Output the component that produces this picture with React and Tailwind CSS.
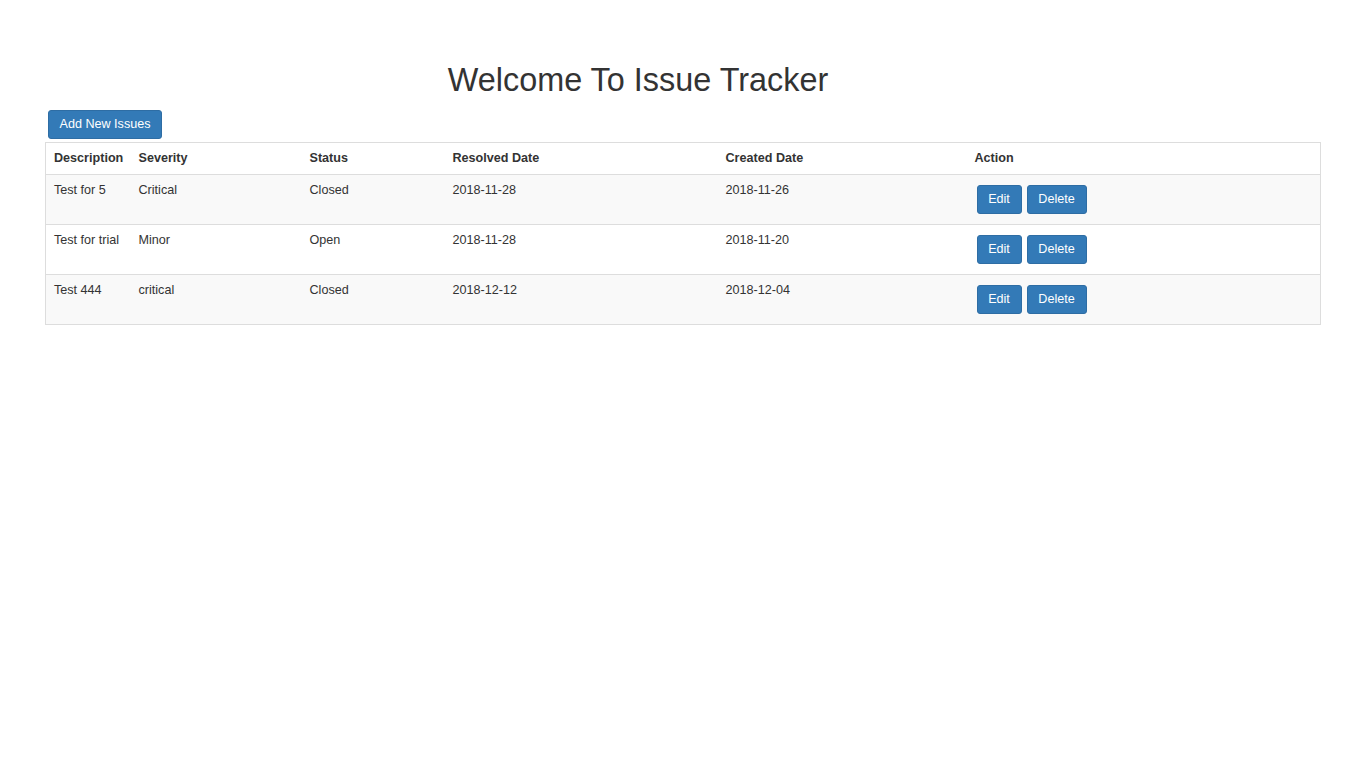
import React from "react";

const issues = [
  { description: "Test for 5", severity: "Critical", status: "Closed", resolved: "2018-11-28", created: "2018-11-26" },
  { description: "Test for trial", severity: "Minor", status: "Open", resolved: "2018-11-28", created: "2018-11-20" },
  { description: "Test 444", severity: "critical", status: "Closed", resolved: "2018-12-12", created: "2018-12-04" },
];

const btn =
  "inline-block h-[29px] rounded-[3px] border border-[#2e6da4] bg-[#337ab7] text-white text-[12.6px] leading-none";

const App = () => {
  return (
    <div
      className="min-h-screen bg-white text-[#333] text-[12.6px] leading-[18px]"
      style={{ fontFamily: '"Liberation Sans", Arial, sans-serif' }}
    >
      {/* HEADER */}
      <div className="w-[1276px] pt-[62px] text-center">
        <h1 className="text-[32.4px] leading-[36px] font-normal">Welcome To Issue Tracker</h1>
      </div>

      <div className="pl-[45px] pr-[45px]">
        <div className="pt-[12px] pb-[3px] pl-[3px]">
          <button className={`${btn} w-[114px]`}>Add New Issues</button>
        </div>

        {/* ISSUES TABLE */}
        <table className="w-[1276px] border border-[#ddd] border-collapse table-fixed">
          <colgroup>
            <col className="w-[85px]" />
            <col className="w-[171px]" />
            <col className="w-[143px]" />
            <col className="w-[273px]" />
            <col className="w-[249px]" />
            <col />
          </colgroup>
          <thead>
            <tr className="h-[32px] border-b border-[#ddd]">
              {["Description", "Severity", "Status", "Resolved Date", "Created Date", "Action"].map((h) => (
                <th key={h} className="px-[8px] pt-[6px] pb-[6px] text-left align-top font-bold">
                  {h}
                </th>
              ))}
            </tr>
          </thead>
          <tbody>
            {issues.map((row, i) => (
              <tr
                key={i}
                className={`h-[50px] border-b border-[#ddd] ${i % 2 === 0 ? "bg-[#f9f9f9]" : "bg-white"}`}
              >
                <td className="px-[8px] pt-[6px] align-top">{row.description}</td>
                <td className="px-[8px] pt-[6px] align-top">{row.severity}</td>
                <td className="px-[8px] pt-[6px] align-top">{row.status}</td>
                <td className="px-[8px] pt-[6px] align-top">{row.resolved}</td>
                <td className="px-[8px] pt-[6px] align-top">{row.created}</td>
                <td className="px-[8px] pt-[4px] align-top">
                  <div className="flex gap-[5px] pl-[2px] pt-[6px]">
                    <button className={`${btn} w-[45px]`}>Edit</button>
                    <button className={`${btn} w-[60px]`}>Delete</button>
                  </div>
                </td>
              </tr>
            ))}
          </tbody>
        </table>
      </div>
    </div>
  );
};

export default App;
